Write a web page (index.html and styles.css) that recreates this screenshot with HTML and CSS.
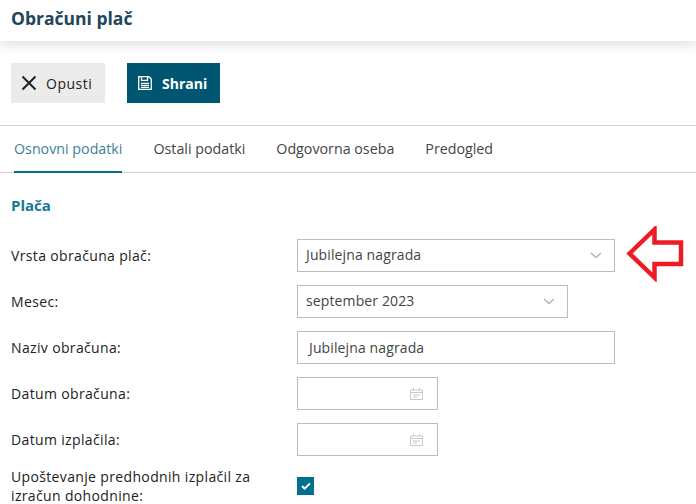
FILE: index.html
```html
<!DOCTYPE html>
<html lang="sl">
<head>
  <meta charset="UTF-8" />
  <title>Obračuni plač</title>
  <link rel="stylesheet" href="styles.css">
</head>
<body>

  <header class="page-header">
    <h1>Obračuni plač</h1>
  </header>

  <div class="toolbar">
    <button class="btn btn-cancel">
      <svg width="16" height="16" viewBox="0 0 16 16"><path d="M1.500 1.500l13 13M14.500 1.500l-13 13" fill="none" stroke="#222" stroke-width="2"/></svg>
      Opusti
    </button>
    <button class="btn btn-save">
      <svg width="14" height="14" viewBox="0 0 14 14" fill="none" stroke="#fff" stroke-width="1.300"><path d="M.7.7h10.200l2.400 2.400v10.200H.7z"/><path d="M3.500.7v3.600h6V.7M3 7.300h8M3 9.300h8M3 11.300h8"/></svg>
      Shrani
    </button>
  </div>

  <nav class="tabs">
    <a class="tab active" href="#">Osnovni podatki</a>
    <a class="tab" href="#">Ostali podatki</a>
    <a class="tab" href="#">Odgovorna oseba</a>
    <a class="tab" href="#">Predogled</a>
  </nav>

  <section class="form">
    <h2>Plača</h2>

    <div class="row">
      <label>Vrsta obračuna plač:</label>
      <div class="field wide">
        Jubilejna nagrada
        <svg class="chevron" width="12" height="7" viewBox="0 0 12 7"><path d="M1 1l5 4.500L11 1" fill="none" stroke="#b5b5b5" stroke-width="1.600"/></svg>
      </div>
    </div>

    <div class="row">
      <label>Mesec:</label>
      <div class="field medium">
        september 2023
        <svg class="chevron" width="12" height="7" viewBox="0 0 12 7"><path d="M1 1l5 4.500L11 1" fill="none" stroke="#b5b5b5" stroke-width="1.600"/></svg>
      </div>
    </div>

    <div class="row">
      <label>Naziv obračuna:</label>
      <div class="field wide input">Jubilejna nagrada</div>
    </div>

    <div class="row">
      <label>Datum obračuna:</label>
      <div class="field small">
        <svg class="calendar" width="13" height="12" viewBox="0 0 13 12" fill="none" stroke="#c9c9c9"><path d="M.5 2h12v9.500H.5zM.5 4.500h12M3.500 0v2M9.500 0v2M3 7h7M3 9h4"/></svg>
      </div>
    </div>

    <div class="row">
      <label>Datum izplačila:</label>
      <div class="field small">
        <svg class="calendar" width="13" height="12" viewBox="0 0 13 12" fill="none" stroke="#c9c9c9"><path d="M.5 2h12v9.500H.5zM.5 4.500h12M3.500 0v2M9.500 0v2M3 7h7M3 9h4"/></svg>
      </div>
    </div>

    <div class="row row-check">
      <label>Upoštevanje predhodnih izplačil za izračun dohodnine:</label>
      <span class="checkbox">
        <svg width="10" height="8" viewBox="0 0 10 8"><path d="M1 4l2.600 2.600L9 1.400" fill="none" stroke="#fff" stroke-width="2"/></svg>
      </span>
    </div>
  </section>

  <svg class="arrow" width="60" height="56" viewBox="0 0 60 56"><path d="M4.500 27.500L29.500 3.500V16.500H56V38H29.500V51.500z" fill="none" stroke="#ed1c24" stroke-width="4.500" stroke-linejoin="miter"/></svg>

</body>
</html>
```

FILE: styles.css
```css
html, body {
  height: 504px;
  overflow: hidden;
}

body {
  font-family: 'Open Sans', sans-serif;
  font-size: 14px;
  color: #333;
  background-color: #fff;
  margin: 0;
  padding: 0;
  position: relative;
}

.page-header {
  height: 41px;
  padding-left: 11px;
  box-shadow: 0 3px 12px rgba(0, 0, 0, 0.14);
}

.page-header h1 {
  margin: 0;
  font-size: 17.5px;
  line-height: 37px;
  font-weight: 700;
  color: #21465a;
}

.toolbar {
  display: flex;
  gap: 22px;
  padding: 22px 11px;
  height: 40px;
}

.btn {
  display: flex;
  align-items: center;
  height: 40px;
  border: none;
  font-family: inherit;
  font-size: 14px;
  padding: 0;
}

.btn-cancel {
  width: 94px;
  padding-left: 10px;
  gap: 9px;
  background-color: #ebebeb;
  color: #222;
  letter-spacing: 0.5px;
}

.btn-save {
  width: 93px;
  padding-left: 11px;
  gap: 10px;
  background-color: #005670;
  color: #fff;
  font-weight: 700;
}

.tabs {
  display: flex;
  gap: 31px;
  height: 46px;
  padding-left: 14px;
  border-top: 1px solid #d2d2d2;
  border-bottom: 1px solid #d2d2d2;
  font-size: 14.25px;
}

.tab {
  color: #444;
  text-decoration: none;
  line-height: 46px;
  height: 45px;
}

.tab.active {
  color: #3f7f96;
  border-bottom: 2px solid #00708f;
}

.form {
  padding: 0 11px;
}

.form h2 {
  margin: 0;
  padding-top: 22px;
  height: 44px;
  font-size: 15px;
  line-height: 21px;
  font-weight: 700;
  color: #137a98;
}

.row {
  display: flex;
  align-items: center;
  height: 33px;
  margin-bottom: 13px;
}

.row label {
  width: 286px;
  flex-shrink: 0;
  padding-bottom: 1px;
  color: #222;
  letter-spacing: 0.35px;
}

.field {
  box-sizing: border-box;
  height: 33px;
  padding: 0 8px 2px;
  border: 1px solid #bcbcbc;
  display: flex;
  align-items: center;
  justify-content: space-between;
  color: #444;
  letter-spacing: 0.12px;
}

.field.input {
  padding: 0 11px;
}

.wide { width: 318px; }
.medium { width: 271px; }
.small { width: 141px; }

.chevron {
  margin: 2px 4px 0 0;
}

.calendar {
  margin: 2px 6px 0 auto;
}

.row-check {
  height: 34px;
  margin: 0;
}

.row-check label {
  width: 262px;
  margin-right: 24px;
  padding: 0;
  line-height: 19px;
}

.checkbox {
  width: 17px;
  height: 18px;
  background-color: #00708f;
  display: flex;
  align-items: center;
  justify-content: center;
}

/* rdeca puscica cez obrazec */
.arrow {
  position: absolute;
  left: 625px;
  top: 226px;
}
```
